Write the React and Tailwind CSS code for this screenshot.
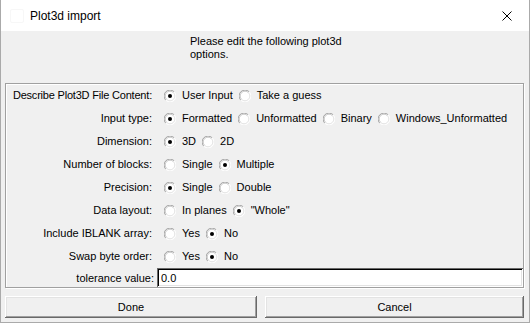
import { useState } from 'react'

const ROWS = [
  { label: 'Describe Plot3D File Content:', options: ['User Input', 'Take a guess'], picked: 0, tight: true },
  { label: 'Input type:', options: ['Formatted', 'Unformatted', 'Binary', 'Windows_Unformatted'], picked: 0 },
  { label: 'Dimension:', options: ['3D', '2D'], picked: 0 },
  { label: 'Number of blocks:', options: ['Single', 'Multiple'], picked: 1 },
  { label: 'Precision:', options: ['Single', 'Double'], picked: 0 },
  { label: 'Data layout:', options: ['In planes', '"Whole"'], picked: 1 },
  { label: 'Include IBLANK array:', options: ['Yes', 'No'], picked: 1 },
  { label: 'Swap byte order:', options: ['Yes', 'No'], picked: 1 },
]

function Radio({ checked }) {
  return (
    <svg width="12" height="12" viewBox="0 0 12 12" className="shrink-0">
      <circle cx="6" cy="6" r="5.5" fill="#fff" />
      <path d="M1.8 10.2 A5.5 5.5 0 0 1 10.2 1.8" fill="none" stroke="#a0a0a0" strokeWidth="1" />
      <path d="M10.2 1.8 A5.5 5.5 0 0 1 1.8 10.2" fill="none" stroke="#ffffff" strokeWidth="1" />
      <path d="M2.6 9.4 A4.5 4.5 0 0 1 9.4 2.6" fill="none" stroke="#c8c8c8" strokeWidth="1" />
      <path d="M9.4 2.6 A4.5 4.5 0 0 1 2.6 9.4" fill="none" stroke="#e3e3e3" strokeWidth="1" />
      {checked && <circle cx="6" cy="6" r="2" fill="#000" />}
    </svg>
  )
}

function OptionRow({ row }) {
  const [picked, setPicked] = useState(row.picked)
  return (
    <div className="flex h-[23px] items-center">
      <div className={`w-[146px] text-right ${row.tight ? 'tracking-[-0.2px]' : ''}`}>{row.label}</div>
      <div className="ml-[12px] flex items-center gap-[6px]">
        {row.options.map((o, i) => (
          <button key={o} onClick={() => setPicked(i)} className="flex items-center gap-[6px]">
            <Radio checked={picked === i} />
            <span>{o}</span>
          </button>
        ))}
      </div>
    </div>
  )
}

const raised =
  'bg-[#f0f0f0] shadow-[inset_-1px_-1px_0_#696969,inset_1px_1px_0_#ffffff,inset_-2px_-2px_0_#a0a0a0,inset_2px_2px_0_#e3e3e3]'

export default function App() {
  const [tol, setTol] = useState('0.0')

  return (
    <div
      className="flex h-[323px] w-[530px] flex-col border-x border-b border-[#aaaaaa] bg-[#f0f0f0] text-[11px] leading-[13px] text-black"
      style={{ fontFamily: '"Liberation Sans", Arial, sans-serif' }}
    >
      <div className="flex h-[31px] shrink-0 items-center bg-white">
        <div className="ml-[9px] h-[14px] w-[14px] rounded-[2px] border border-[#f7f7f7]" />
        <div className="ml-[6px] text-[12px] leading-[14px]">Plot3d import</div>
        <svg width="10" height="10" viewBox="0 0 10 10" className="ml-auto mr-[17px]">
          <path d="M0.5 0.5 L9.5 9.5 M9.5 0.5 L0.5 9.5" stroke="#000" strokeWidth="1" />
        </svg>
      </div>

      <div className="ml-[189px] mt-[4px]">
        <div>Please edit the following plot3d</div>
        <div>options.</div>
      </div>

      <div className="ml-[4px] mt-[22px] w-[519px] border border-[#a0a0a0] shadow-[inset_1px_1px_0_#ffffff,1px_1px_0_#ffffff]">
        {ROWS.map((r) => (
          <OptionRow key={r.label} row={r} />
        ))}
        <div className="flex h-[19px] items-start">
          <div className="w-[148px] pt-[4px] text-right">tolerance value:</div>
          <input
            value={tol}
            onChange={(e) => setTol(e.target.value)}
            className="ml-[3px] h-[19px] flex-1 bg-white pl-[4px] outline-none shadow-[inset_1px_1px_0_#696969,inset_-1px_-1px_0_#ffffff,inset_2px_2px_0_#000000,inset_-2px_-2px_0_#e3e3e3]"
          />
        </div>
      </div>

      <div className="ml-[4px] mt-[8px] flex gap-[8px]">
        <button className={`h-[22px] w-[252px] ${raised}`}>Done</button>
        <button className={`h-[22px] w-[259px] ${raised}`}>Cancel</button>
      </div>
    </div>
  )
}
